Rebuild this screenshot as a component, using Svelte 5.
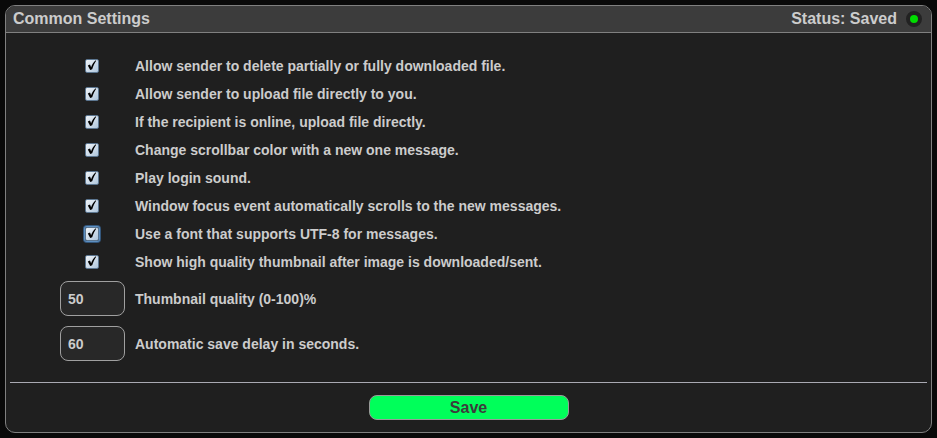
<script>
  let status = $state('Saved');
  let options = $state([
    { id: 'delete', text: 'Allow sender to delete partially or fully downloaded file.', on: true },
    { id: 'upload', text: 'Allow sender to upload file directly to you.', on: true },
    { id: 'direct', text: 'If the recipient is online, upload file directly.', on: true },
    { id: 'scrollbar', text: 'Change scrollbar color with a new one message.', on: true },
    { id: 'sound', text: 'Play login sound.', on: true },
    { id: 'focus', text: 'Window focus event automatically scrolls to the new messages.', on: true },
    { id: 'font', text: 'Use a font that supports UTF-8 for messages.', on: true, active: true },
    { id: 'thumbnail', text: 'Show high quality thumbnail after image is downloaded/sent.', on: true }
  ]);
  let fields = $state([
    { id: 'quality', text: 'Thumbnail quality (0-100)%', value: '50' },
    { id: 'delay', text: 'Automatic save delay in seconds.', value: '60' }
  ]);
</script>

<form class="panel" onsubmit={(e) => { e.preventDefault(); status = 'Saved'; }}>
  <header>
    <h1>Common Settings</h1>
    <div class="status">Status: {status}<span class="light"></span></div>
  </header>

  <div class="options">
    {#each options as option (option.id)}
      <div class="option">
        <span class="control">
          <span class="tick" class:active={option.active}>
            <input type="checkbox" id={option.id} bind:checked={option.on} />
            {#if option.on}
              <svg viewBox="0 0 14 14" aria-hidden="true">
                <path d="M2.8 6.4 5 5.6 6.1 8.2C7 5.4 8.4 3 10.8 1.2L11.2 1.7C9.4 4.2 8.2 7 7.2 10.3L5.2 11.1Z" fill="#000" />
              </svg>
            {/if}
          </span>
        </span>
        <label for={option.id}>{option.text}</label>
      </div>
    {/each}
  </div>

  <div class="fields">
    {#each fields as field (field.id)}
      <div class="option">
        <span class="control"><input type="text" id={field.id} bind:value={field.value} /></span>
        <label for={field.id}>{field.text}</label>
      </div>
    {/each}
  </div>

  <hr />
  <button type="submit">Save</button>
</form>

<style>
  :global(body) {
    margin: 0;
    padding: 5px;
    background: #090909;
  }

  .panel {
    display: flex;
    flex-direction: column;
    padding-bottom: 12px;
    border: 1px solid #808080;
    border-radius: 10px;
    background: #1f1f1f;
    color: #ccc;
    font: bold 14px/18px 'Liberation Sans', Arial, sans-serif;
    overflow: hidden;
  }

  header {
    display: flex;
    align-items: center;
    justify-content: space-between;
    height: 26px;
    padding: 0 9px 0 7px;
    border-bottom: 1px solid #808080;
    background: #3c3c3c;
    font-size: 16px;
  }

  h1 {
    margin: 0;
    font: inherit;
  }

  .status {
    display: flex;
    align-items: center;
    gap: 9px;
  }

  .light {
    width: 8px;
    height: 8px;
    border: 4px solid #222;
    border-radius: 50%;
    background: #00dc00;
  }

  .options {
    padding: 19px 0 5px 54px;
  }

  .option {
    display: flex;
    align-items: center;
    gap: 10px;
    min-height: 28px;
  }

  .control {
    display: flex;
    justify-content: center;
    width: 65px;
  }

  .tick {
    position: relative;
    width: 14px;
    height: 14px;
    margin-right: 1px;
    border-radius: 2px;
  }

  .tick.active {
    box-shadow: 0 0 0 1px #5d8fc0, 0 0 0 2px #34577c;
  }

  .tick input {
    display: block;
    appearance: none;
    box-sizing: border-box;
    width: 14px;
    height: 14px;
    margin: 0;
    border: 1px solid #5c7690;
    border-radius: 2px;
    background: linear-gradient(135deg, #f0f4f8, #afc6dc);
  }

  .tick svg {
    position: absolute;
    inset: 0;
    pointer-events: none;
  }

  .fields {
    display: flex;
    flex-direction: column;
    gap: 10px;
    padding-left: 54px;
  }

  .fields input {
    box-sizing: border-box;
    width: 65px;
    height: 35px;
    padding: 0 7px;
    border: 1px solid #a0a0a0;
    border-radius: 8px;
    background: #282828;
    color: inherit;
    font: inherit;
  }

  hr {
    align-self: stretch;
    height: 1px;
    margin: 21px 4px 12px;
    border: 0;
    background: #a9a9b2;
  }

  button {
    align-self: center;
    width: 200px;
    height: 25px;
    padding: 0;
    border: 1px solid #999;
    border-radius: 8px;
    background: #00ff5a;
    color: #3c3c3c;
    font: bold 16px/18px 'Liberation Sans', Arial, sans-serif;
  }
</style>
